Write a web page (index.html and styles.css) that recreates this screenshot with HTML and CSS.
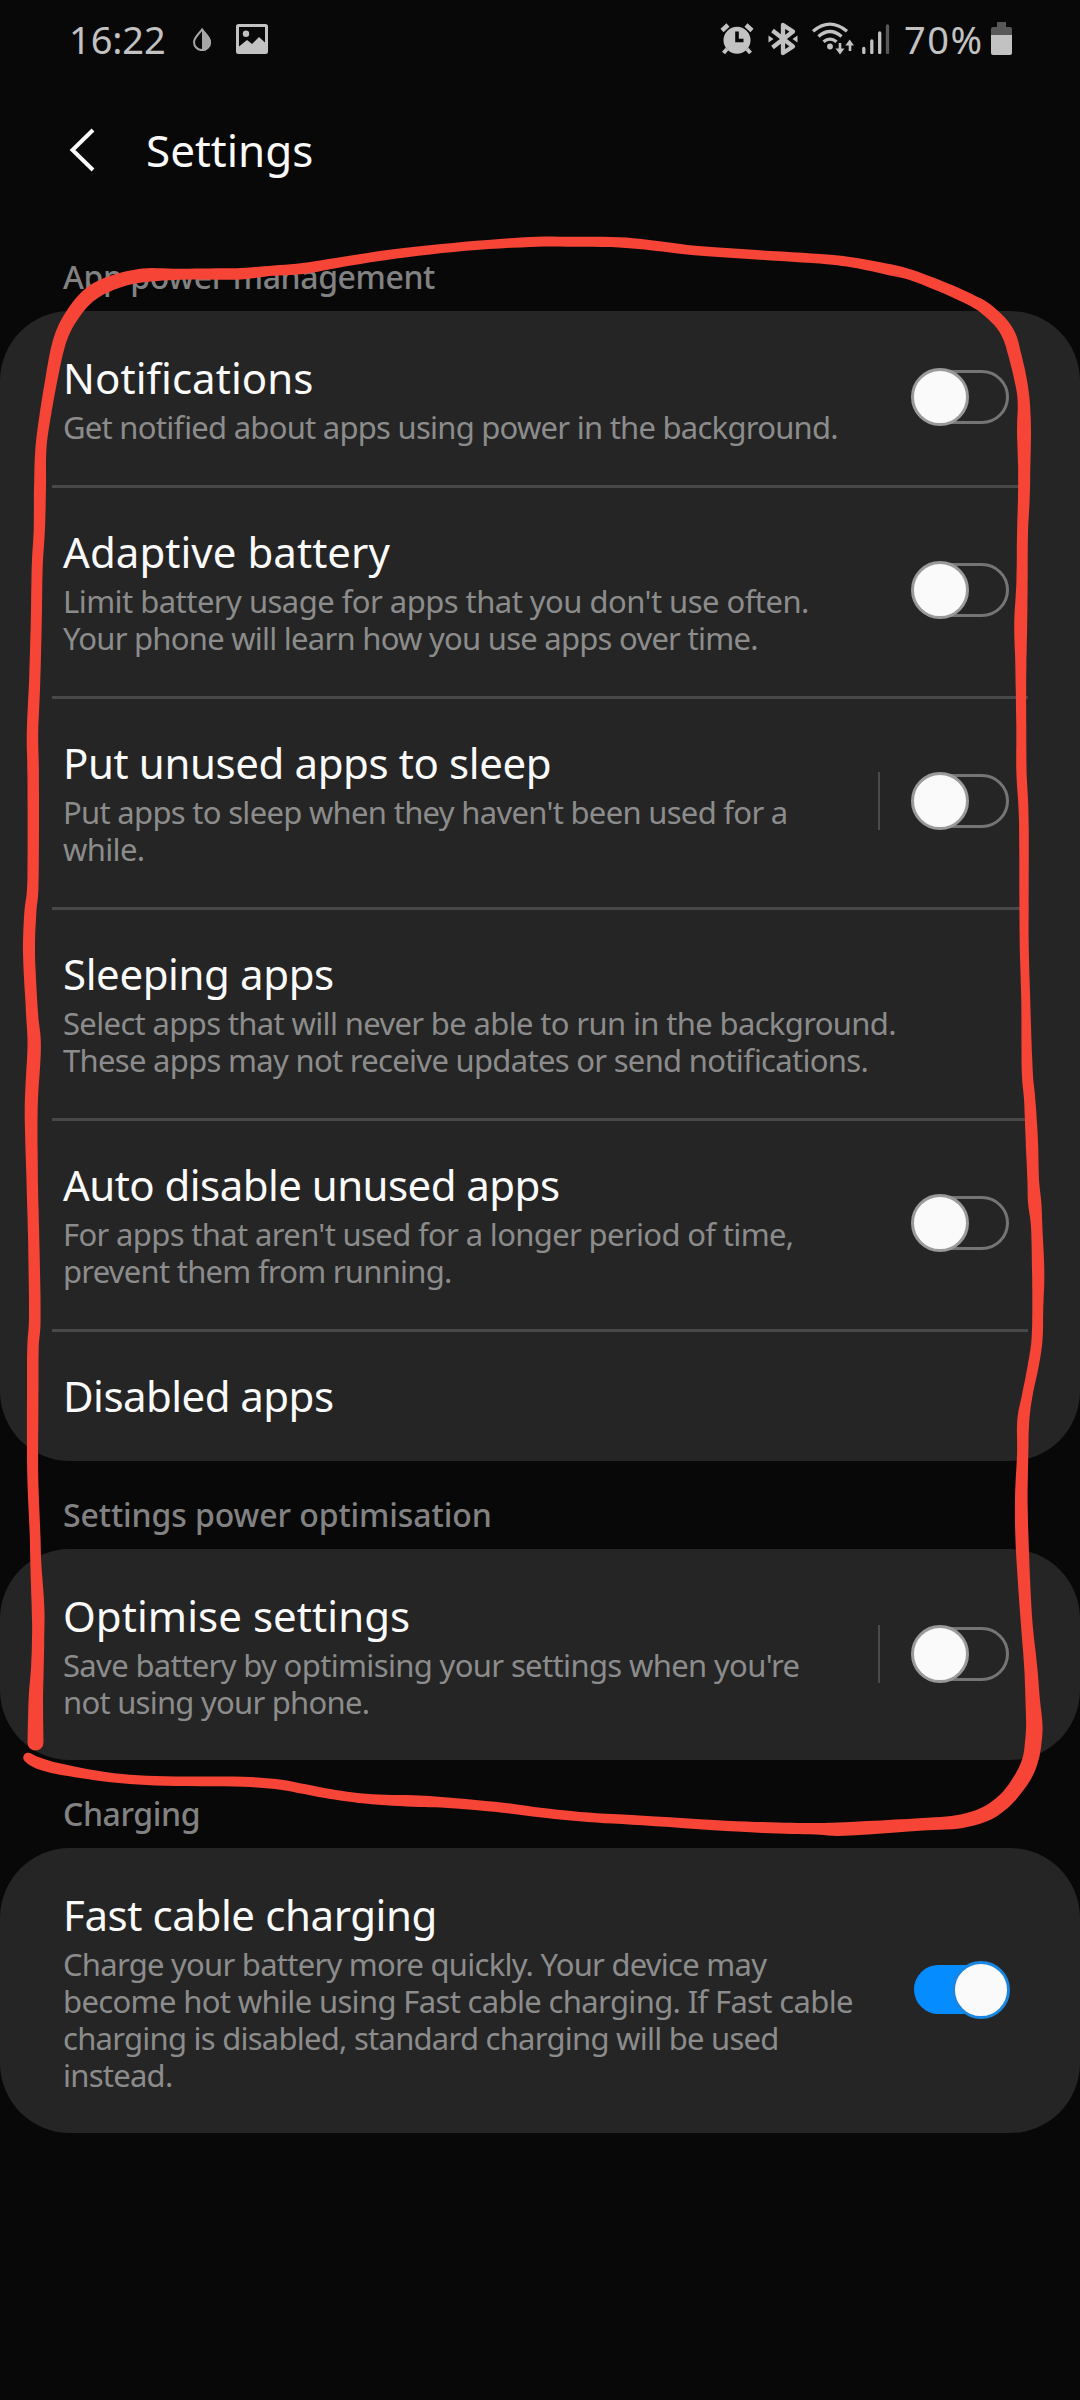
FILE: index.html
```html
<!DOCTYPE html>
<html lang="en">
<head>
<meta charset="utf-8">
<title>Settings</title>
<link rel="stylesheet" href="styles.css">
</head>
<body>
<div class="screen">
  <div class="status">
    <span class="clock">16:22</span>
    <svg class="i-drop" viewBox="0 0 20 24" width="20" height="24">
      <path d="M10 2.5 C6.500 7.500 2 10.500 2 15.200 A8 7.900 0 0 0 18 15.200 C18 10.500 13.500 7.500 10 2.500Z" fill="none" stroke="#a6a6a6" stroke-width="2"/>
      <path d="M10 1 C14 7 19 10 19 15.200 A9 8.800 0 0 1 10 24Z" fill="#a6a6a6"/>
    </svg>
    <svg class="i-pic" viewBox="0 0 32 30" width="32" height="30">
      <path fill="#c2c2c2" fill-rule="evenodd" d="M2.500 0H29.500Q32 0 32 2.500V27.500Q32 30 29.500 30H2.500Q0 30 0 27.500V2.500Q0 0 2.500 0ZM3 3V22.500L11 16L16 20L23 13L29 18.500V3Z"/>
      <circle cx="10" cy="9.700" r="3.200" fill="#c2c2c2"/>
    </svg>
    <div class="status-right">
      <svg class="i-alarm" viewBox="0 0 34 32" width="34" height="32">
        <circle cx="17" cy="17.300" r="13.500" fill="#c2c2c2"/>
        <path d="M2 7.500L8 2M32 7.500L26 2" stroke="#c2c2c2" stroke-width="4.500"/>
        <path d="M7 26L3.500 30M27 26L30.500 30" stroke="#c2c2c2" stroke-width="4"/>
        <path d="M17 8.500V17.500H23.500" fill="none" stroke="#080808" stroke-width="3.600"/>
      </svg>
      <svg class="i-bt" viewBox="0 0 30 34" width="30" height="34">
        <path d="M4.500 8.500L25 24.500L15 31V3L25 9.500L4.500 25.500" fill="none" stroke="#c2c2c2" stroke-width="4.300" stroke-linejoin="round"/>
        <path d="M0.500 13.500V20.500L5.500 17ZM29.500 13.500V20.500L24.500 17Z" fill="#c2c2c2"/>
      </svg>
      <svg class="i-wifi" viewBox="0 0 42 33" width="42" height="33">
        <g fill="none" stroke="#c2c2c2" stroke-width="3.300">
          <path d="M1 9.200Q18 -5 35 9.200"/>
          <path d="M6.500 14.500Q18 4.500 29.500 14.500"/>
          <path d="M11.500 19.800Q18 14.500 24.500 19.800"/>
          <path d="M28 21V29M38 29V21" stroke-width="2.600"/>
        </g>
        <circle cx="18" cy="24.500" r="2.900" fill="#c2c2c2"/>
        <path d="M23.500 26.500H32.500L28 32.500ZM33.300 23.500H42L37.700 17.500Z" fill="#c2c2c2"/>
      </svg>
      <svg class="i-signal" viewBox="0 0 28 30" width="28" height="30">
        <path d="M1.800 24.500V28.500M9.800 17V28.500M17.700 9V28.500" stroke="#c2c2c2" stroke-width="3.300" stroke-linecap="round"/>
        <path d="M25.500 2V28.500" stroke="#585858" stroke-width="3.300" stroke-linecap="round"/>
      </svg>
      <span class="percent">70%</span>
      <svg class="i-batt" viewBox="0 0 21 33" width="21" height="33">
        <path d="M6 0H15V5H19Q21 5 21 7V13H0V7Q0 5 2 5H6Z" fill="#585858"/>
        <path d="M0 13H21V31Q21 33 19 33H2Q0 33 0 31Z" fill="#c2c2c2"/>
      </svg>
    </div>
  </div>

  <header class="header">
    <svg viewBox="0 0 28 44" width="28" height="44"><path d="M25 2L4.500 22L25 42" fill="none" stroke="#fafafa" stroke-width="4"/></svg>
    <h1>Settings</h1>
  </header>

  <h2 class="section snug">App power management</h2>
  <div class="card">
    <div class="row">
      <div class="text"><p class="title wide">Notifications</p><p class="desc"><span class="tight">Get notified about apps using power in the background.</span></p></div>
      <span class="toggle"></span>
    </div>
    <div class="row">
      <div class="text"><p class="title wide">Adaptive battery</p><p class="desc"><span class="loose">Limit battery usage for apps that you don't use often.</span><br><span class="tight">Your phone will learn how you use apps over time.</span></p></div>
      <span class="toggle"></span>
    </div>
    <div class="row">
      <div class="text"><p class="title">Put unused apps to sleep</p><p class="desc"><span class="snug">Put apps to sleep when they haven't been used for a</span><br>while.</p></div>
      <span class="bar"></span><span class="toggle"></span>
    </div>
    <div class="row">
      <div class="text"><p class="title">Sleeping apps</p><p class="desc">Select apps that will never be able to run in the background.<br><span class="snug">These apps may not receive updates or send notifications.</span></p></div>
    </div>
    <div class="row">
      <div class="text"><p class="title narrow">Auto disable unused apps</p><p class="desc">For apps that aren't used for a longer period of time,<br><span class="tight">prevent them from running.</span></p></div>
      <span class="toggle"></span>
    </div>
    <div class="row">
      <div class="text"><p class="title narrow">Disabled apps</p></div>
    </div>
  </div>

  <h2 class="section">Settings power optimisation</h2>
  <div class="card">
    <div class="row">
      <div class="text"><p class="title wide">Optimise settings</p><p class="desc">Save battery by optimising your settings when you're<br><span class="tight">not using your phone.</span></p></div>
      <span class="bar"></span><span class="toggle"></span>
    </div>
  </div>

  <h2 class="section snug">Charging</h2>
  <div class="card">
    <div class="row">
      <div class="text"><p class="title">Fast cable charging</p><p class="desc"><span class="tight">Charge your battery more quickly. Your device may</span><br>become hot while using Fast cable charging. If Fast cable<br><span class="tight">charging is disabled, standard charging will be used</span><br><span class="tight">instead.</span></p></div>
      <span class="toggle on"></span>
    </div>
  </div>

  <svg class="marker" viewBox="0 0 1080 2400" width="1080" height="2400"><path id="ink" fill="#f64437"/></svg>
</div>
<script src="marker.js"></script>
</body>
</html>
```
FILE: styles.css
```css
*, *::before, *::after { box-sizing: border-box; }
body { margin: 0; background: #080808; color: #fafafa; font-family: "Noto Sans", sans-serif; }
h1, h2, p { margin: 0; font-weight: 400; white-space: nowrap; }
svg { display: block; flex: none; }
.screen { position: relative; width: 1080px; height: 2400px; overflow: hidden; }

.status { display: flex; align-items: flex-start; height: 80px; padding-left: 69px; color: #c2c2c2; }
.clock, .percent { font-size: 38px; line-height: 52px; padding-top: 13px; }
.clock { width: 123px; letter-spacing: -0.1px; }
.i-drop { margin-top: 27px; }
.i-pic { margin: 24px 0 0 24px; }
.status-right { display: flex; align-items: flex-start; margin-left: 452px; }
.i-alarm { margin-top: 23px; }
.i-bt { margin: 22px 0 0 14px; }
.i-wifi { margin: 22px 0 0 14px; }
.i-signal { margin: 24px 0 0 8px; }
.percent { width: 86px; margin-left: 14px; letter-spacing: 1.5px; }
.i-batt { margin: 22px 0 0 1px; }

.header { display: flex; align-items: center; height: 143px; padding: 0 0 4px 68px; }
.header h1 { margin-left: 50px; font-size: 44px; line-height: 60px; letter-spacing: 0; }

.section { height: 88px; padding: 32px 0 0 63px; font-size: 32px; line-height: 44px; font-weight: 500; color: #828282; letter-spacing: -0.1px; }
.section.snug { letter-spacing: -0.4px; }
.card { border-radius: 70px; background: #252525; }
.row { display: flex; align-items: flex-start; margin: 0 52px; padding: 39px 19px 37px 11px; }
.row + .row { padding-top: 36px; border-top: 3px solid #484848; }
.text { flex: 1; min-width: 0; }
.title { font-size: 42px; line-height: 56px; letter-spacing: -0.4px; }
.title.wide { letter-spacing: 0.05px; }
.title.narrow { letter-spacing: -0.55px; }
.desc { margin: 3px 0 2px; font-size: 31px; line-height: 37px; color: #8c8c8c; letter-spacing: -0.65px; font-feature-settings: "liga"; }
.desc .snug { letter-spacing: -0.7px; }
.desc .tight { letter-spacing: -0.75px; }
.desc .loose { letter-spacing: -0.54px; }

.bar { align-self: center; flex: none; width: 2px; height: 58px; margin: -4px 31px 0 0; background: #4a4a4a; }
.toggle { position: relative; align-self: center; flex: none; width: 98px; height: 58px; margin-top: -4px; }
.toggle::before { content: ""; position: absolute; left: 3px; top: 2px; width: 95px; height: 54px; border: 3px solid #757575; border-radius: 27px; }
.toggle::after { content: ""; position: absolute; left: 0; top: 0; width: 58px; height: 58px; border: 3px solid #9a9a9a; border-radius: 50%; background: #fafafa; }
.toggle.on::before { top: 4px; height: 49px; border: 0; background: #058cff; }
.toggle.on::after { left: 41px; border-color: #1a86e0; }

.marker { position: absolute; left: 0; top: 0; }
```
FILE: marker.js
```js
// Freehand marker stroke: x, y, width samples along its centre line.
const samples = [
[35.5,1742.5,16],[35.8,1700,14.5],[37.4,1667,12.7],[38.2,1633,12.2],[38,1607,12.7],[35.8,1563,11],[35,1533,10.7],[32.7,1473,11],[32.7,1397,11.5],[33,1347,11.5],[34.8,1317,11.7],[33.7,1240,11.3],[32.2,1180,11.5],[31.2,1107,13],[34.2,1047,13.5],[32,1013,12],[29,953,12],[30.3,913,12],[33,880,11.3],[33.2,780,11.5],[32.5,733,11.5],[34.7,680,11.3],[36.3,620,11],[37.2,567,11],[39.3,530,11.3],[40,487,12],[41,447,11],[45.6,413,11.5],[50,387,12],[56.5,353,13],[62.5,333,13.5],[71,317,14],[84,300,14.5],[100,288,15],[124,279,14],[148,275,13.5],[179,274.3,11],[210,274,11.3],[241,273.8,11.5],[269,271,10.3],[303,268.5,11],[344,261.7,10],[396,253.8,9.7],[465,246.3,9],[530,242,10],[566,241.7,10],[619,242.3,10.3],[657,246,10],[695,250.5,9.7],[760,255,9.5],[820,258.8,9.7],[853,262.5,10],[891,270,11],[912,275.3,10.5],[946,288.5,11],[973,301,11.5],[986,309,12.5],[1001,323,13],[1009.5,336.7,13.5],[1014.3,353,13],[1020,376.7,12.5],[1023.6,400,12],[1024,430,14],[1024.2,467,12.3],[1023.8,500,11.7],[1022.5,533,11],[1022,583,11.3],[1020.7,623,13],[1020.8,660,11.3],[1021,697,10.3],[1021.3,733,10],[1021.5,773,10.3],[1023.8,820,9.7],[1024,900,9.3],[1024.3,950,9],[1025.8,1003,9],[1027.2,1070,11],[1029.7,1100,11.3],[1031.8,1140,12.3],[1033.2,1180,11.7],[1034.7,1203,13.3],[1036.7,1227,11.5],[1038.2,1273,12.3],[1037.8,1307,11],[1037,1340,11],[1033,1367,11],[1027.7,1393,10.5],[1023.3,1420,12],[1022.7,1453,11.3],[1021.3,1500,12.7],[1022.4,1550,13],[1026.2,1617,11.7],[1030.7,1667,13],[1032.7,1700,14.5],[1034.3,1725,16.5],[1033.2,1743,16.5],[1030.5,1759,16],[1024,1775,16],[1010,1795,15],[995.5,1808,15],[980.5,1816,14.5],[956.7,1822,13.5],[919,1824.5,12.5],[844.8,1829,13.7],[815.5,1828.7,11.5],[777.6,1828,11],[726,1825.8,10.3],[643,1820.5,9.7],[588,1817.3,9.5],[540,1812.5,9.7],[503,1807.7,10],[448,1802.7,10.5],[413,1801,11.5],[372,1799.3,10],[335,1794.8,9.7],[305,1789.2,10],[275.5,1784,10],[234,1781.5,10],[165,1781,9.5],[113.6,1777.8,9.3],[62,1769.5,11],[38,1763,11.5],[28,1757.5,10]
];
const at = i => samples[Math.max(0, Math.min(samples.length - 1, i))];
const pts = [];
for (let i = 0; i < samples.length - 1; i++) {
  for (let s = 0; s < 6; s++) {
    const t = s / 6, [a, b, c, d] = [at(i - 1), at(i), at(i + 1), at(i + 2)];
    pts.push([0, 1, 2].map(k => b[k] + 0.5 * t * (c[k] - a[k] + t * (2*a[k] - 5*b[k] + 4*c[k] - d[k] + t * (3*(b[k] - c[k]) + d[k] - a[k])))));
  }
}
pts.push(samples[samples.length - 1]);
const left = [], right = [];
pts.forEach((p, i) => {
  const a = pts[Math.max(0, i - 1)], b = pts[Math.min(pts.length - 1, i + 1)];
  const dx = b[0] - a[0], dy = b[1] - a[1], l = Math.hypot(dx, dy), h = p[2] / 2;
  left.push((p[0] - dy / l * h).toFixed(1) + " " + (p[1] + dx / l * h).toFixed(1));
  right.unshift((p[0] + dy / l * h).toFixed(1) + " " + (p[1] - dx / l * h).toFixed(1));
});
document.getElementById("ink").setAttribute("d",
  "M" + left.join("L") + "A5 5 0 0 0 " + right.join("L") + "A8 8 0 0 0 " + left[0] + "Z");
```
